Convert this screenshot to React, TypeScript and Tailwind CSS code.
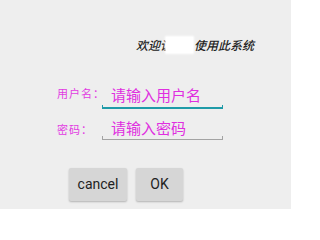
export default function App() {
  const cjk = { fontFamily: '"Noto Sans CJK SC", "Noto Sans", sans-serif' };
  return (
    <div className="w-[291px] h-[209px] bg-[#eeeeee] overflow-hidden flex flex-col" style={cjk}>
      {/* welcome line */}
      <div className="pt-[37px] pl-[136px] flex items-center h-[53px] text-[12px] leading-[16px] italic font-medium text-[#222222] whitespace-nowrap">
        <span>欢迎让</span>
        <span className="inline-block w-[27px] h-[16px] -ml-[6px] bg-white shadow-[0_0_2px_1px_#ffffff]" />
        <span className="ml-[1px]">使用此系统</span>
      </div>

      {/* user name */}
      <div className="mt-[33px] pl-[57px] flex items-start">
        <div className="w-[45px] text-[11px] leading-[14px] tracking-[1px] text-[#e23be2] whitespace-nowrap">用户名：</div>
        <div className="w-[121px] flex flex-col">
          <div className="pl-[9px] text-[15px] leading-[18px] text-[#e02fe0] whitespace-nowrap">请输入用户名</div>
          <div className="mt-[1px] h-[4px] border-x border-b-2 border-[#1f9ba8]" />
        </div>
      </div>

      {/* password */}
      <div className="mt-[11px] pl-[57px] flex items-start">
        <div className="w-[45px] text-[11px] leading-[18px] tracking-[1px] text-[#e23be2] whitespace-nowrap">密码：</div>
        <div className="w-[121px] flex flex-col">
          <div className="pl-[9px] text-[15px] leading-[16px] text-[#e02fe0] whitespace-nowrap">请输入密码</div>
          <div className="h-[4px] border-x border-b border-[#a3a3a3]" />
        </div>
      </div>

      {/* buttons */}
      <div className="mt-[28px] pl-[69px] flex gap-[9px]">
        <button className="w-[58px] h-[33px] bg-[#d6d6d6] rounded-[2px] shadow-[0_1px_2px_rgba(0,0,0,0.25)] text-[14px] text-[#222222] font-['Roboto',sans-serif]">
          cancel
        </button>
        <button className="w-[47px] h-[33px] bg-[#d6d6d6] rounded-[2px] shadow-[0_1px_2px_rgba(0,0,0,0.25)] text-[14px] text-[#222222] font-['Roboto',sans-serif]">
          OK
        </button>
      </div>
    </div>
  );
}
